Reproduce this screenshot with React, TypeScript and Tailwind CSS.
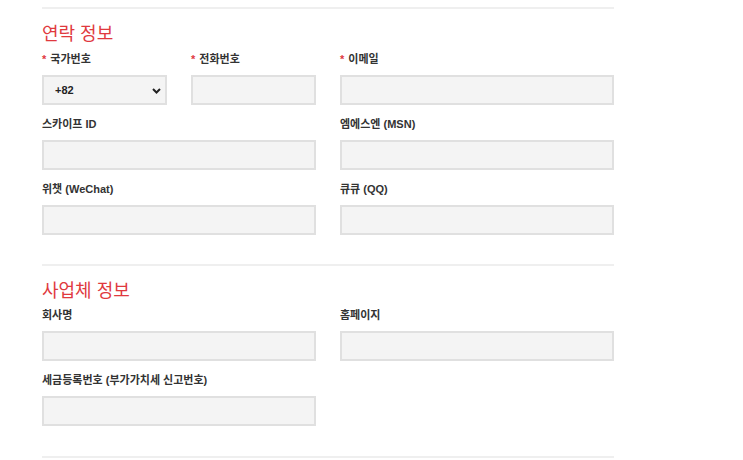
import React from 'react';

const font = { fontFamily: '"Liberation Sans", "Noto Sans CJK KR", sans-serif' };

interface FieldProps {
  label: string;
  required?: boolean;
  className?: string;
  children?: React.ReactNode;
}

const Field: React.FC<FieldProps> = ({ label, required, className, children }) => (
  <div className={className}>
    <label className="block h-4 mb-2 text-[11px] leading-4 font-bold text-[#333] whitespace-nowrap">
      {required && <span className="text-[#e0393e] mr-1">*</span>}
      {label}
    </label>
    {children ?? (
      <input
        type="text"
        className="block w-full h-[30px] bg-[#f4f4f4] border-2 border-[#e0e0e0] outline-none"
      />
    )}
  </div>
);

const CountrySelect = () => (
  <div className="relative h-[30px] bg-[#f4f4f4] border-2 border-[#e0e0e0]">
    <select className="appearance-none w-full h-full bg-transparent pl-[11px] text-[11px] font-bold text-[#222] outline-none">
      <option>+82</option>
    </select>
    <svg
      className="absolute right-[4px] top-[11px] pointer-events-none"
      width="9"
      height="6"
      viewBox="0 0 9 6"
    >
      <polyline points="1,1 4.5,4.5 8,1" fill="none" stroke="#222" strokeWidth="2" />
    </svg>
  </div>
);

export default function App() {
  return (
    <div className="w-[743px] h-[460px] overflow-hidden bg-white" style={font}>
      <div className="ml-[42px] w-[572px] pt-[7px]">
        <section className="border-t-2 border-[#efefef] pb-[29px]">
          <h2 className="mt-[13px] mb-[5px] text-[18px] leading-6 font-normal text-[#e0393e]">연락 정보</h2>
          <div className="grid grid-cols-2 gap-x-6 gap-y-[11px]">
            <div className="grid grid-cols-2 gap-x-6">
              <Field label="국가번호" required>
                <CountrySelect />
              </Field>
              <Field label="전화번호" required />
            </div>
            <Field label="이메일" required />
            <Field label="스카이프 ID" />
            <Field label="엠에스엔 (MSN)" />
            <Field label="위챗 (WeChat)" />
            <Field label="큐큐 (QQ)" />
          </div>
        </section>

        <section className="border-t-2 border-[#efefef] pb-[30px]">
          <h2 className="mt-[13px] mb-[4px] text-[18px] leading-6 font-normal text-[#e0393e]">사업체 정보</h2>
          <div className="grid grid-cols-2 gap-x-6 gap-y-[11px]">
            <Field label="회사명" />
            <Field label="홈페이지" />
            <Field label="세금등록번호 (부가가치세 신고번호)" />
          </div>
        </section>

        <div className="border-t-2 border-[#efefef]" />
      </div>
    </div>
  );
}
